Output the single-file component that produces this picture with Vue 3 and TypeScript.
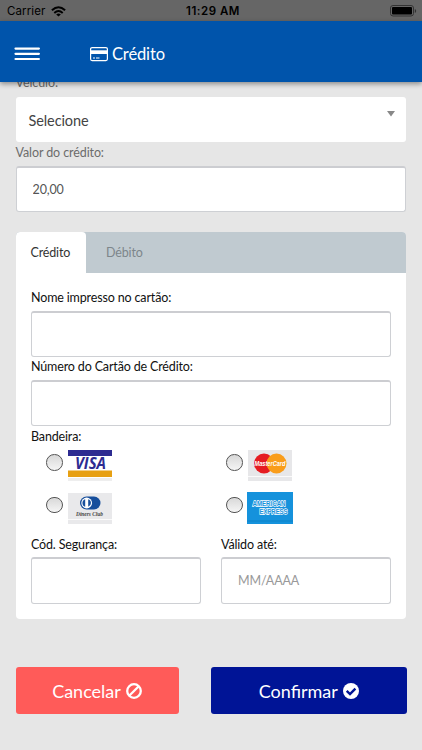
<script setup lang="ts">
import { ref } from 'vue'

type Brand = 'visa' | 'mastercard' | 'diners' | 'amex'

const tab = ref<'credito' | 'debito'>('credito')
const brand = ref<Brand | ''>('')
const amount = ref('20,00')
const brands: Brand[] = ['visa', 'mastercard', 'diners', 'amex']
</script>

<template>
  <div class="screen">
    <div class="status">
      <div class="carrier">
        <span>Carrier</span>
        <svg width="15" height="11" viewBox="0 0 15 11" fill="none" stroke="#000" stroke-width="2">
          <path d="M.9 4.3Q7.500-1.700 14.100 4.300" />
          <path d="M3.300 6.900Q7.500 3.200 11.700 6.900" />
          <path d="M7.500 10.600L5.200 8.400Q7.500 6.700 9.800 8.400Z" fill="#000" stroke="none" />
        </svg>
      </div>
      <div class="clock">11:29 AM</div>
      <div class="battery">
        <svg width="27" height="12" viewBox="0 0 27 12">
          <rect x=".5" y=".5" width="23" height="10.500" rx="2.500" fill="none" stroke="#333" />
          <rect x="2" y="2" width="20" height="7.500" rx="1" fill="#000" />
          <path d="M24.800 4v4q1.400-.6 1.400-2t-1.400-2z" fill="#333" />
        </svg>
      </div>
    </div>

    <header class="bar">
      <svg class="menu" width="26" height="14" viewBox="0 0 26 14" stroke="#fff" stroke-width="2.200" stroke-linecap="round">
        <path d="M1.500 1.600h23.400M1.500 6.800h23.400M1.500 12h23.400" />
      </svg>
      <div class="title">
        <svg width="18" height="16" viewBox="0 0 18 16">
          <rect x=".6" y="1.600" width="16.800" height="13" rx="1.500" fill="none" stroke="#fff" stroke-width="1.200" />
          <path d="M1 4.300h16v3.700H1z" fill="#fff" />
          <path d="M3 12h2M6 12h3.500" stroke="#fff" stroke-width="1.200" />
        </svg>
        <span>Crédito</span>
      </div>
    </header>

    <main class="content">
      <label class="lbl muted first">Veículo:</label>
      <div class="select">
        <span>Selecione</span>
        <svg width="8" height="6" viewBox="0 0 8 6"><path d="M0 0h8L4 5.500z" fill="#888" /></svg>
      </div>
      <label class="lbl muted value-label">Valor do crédito:</label>
      <input v-model="amount" class="field" />

      <section class="card">
        <nav class="tabs">
          <div class="tab" :class="{ active: tab === 'credito' }" @click="tab = 'credito'">Crédito</div>
          <div class="tab" :class="{ active: tab === 'debito' }" @click="tab = 'debito'">Débito</div>
        </nav>
        <div class="form">
          <label class="lbl">Nome impresso no cartão:</label>
          <input class="field" />
          <label class="lbl">Número do Cartão de Crédito:</label>
          <input class="field" />
          <label class="lbl brand-label">Bandeira:</label>
          <div class="brands">
            <div v-for="b in brands" :key="b" class="brand" @click="brand = b">
              <span class="radio" :class="{ on: brand === b }"></span>
              <svg v-if="b === 'visa'" width="46" height="33" viewBox="0 0 46 33">
                <rect x="1" y="1" width="44" height="31" fill="#fff" />
                <rect x="1" y="29" width="44" height="3" fill="#eee" />
                <rect x="1" y="1" width="44" height="6" fill="#2d2b91" />
                <rect x="1" y="21.500" width="44" height="6.500" fill="#e7a013" />
                <text x="8" y="19.600" class="visa" textLength="31" lengthAdjust="spacingAndGlyphs">VISA</text>
              </svg>
              <svg v-else-if="b === 'mastercard'" width="46" height="33" viewBox="0 0 46 33">
                <rect x="1" y="1" width="44" height="31" fill="#e7e7e9" />
                <rect x="1" y="27" width="44" height="1" fill="#fafafa" />
                <circle cx="17" cy="14.500" r="10" fill="#e51c22" />
                <circle cx="29.500" cy="14.500" r="10" fill="#f99d1b" />
                <text x="7.500" y="17.200" class="master" textLength="31" lengthAdjust="spacingAndGlyphs">MasterCard</text>
              </svg>
              <svg v-else-if="b === 'diners'" width="46" height="33" viewBox="0 0 46 33">
                <rect x="1" y="1" width="44" height="31" fill="#e9e9eb" />
                <rect x="1" y="27" width="44" height="1" fill="#fafafa" />
                <rect x="13" y="4.500" width="20.500" height="13" rx="6.500" fill="#174f9c" />
                <circle cx="19.700" cy="11" r="5.400" fill="#fff" />
                <path d="M18.200 7.200v7.600a4 4 0 0 1 0-7.600zM21.200 7.200v7.600a4 4 0 0 0 0-7.600z" fill="#174f9c" />
                <text x="9" y="24.300" class="diners" textLength="27" lengthAdjust="spacingAndGlyphs">Diners Club</text>
              </svg>
              <svg v-else width="46" height="33" viewBox="0 0 46 33">
                <rect width="46" height="32" fill="#1592dc" />
                <rect y="28.500" width="46" height="1" fill="#0c82c8" />
                <text x="5.500" y="14.300" class="amex" textLength="33" lengthAdjust="spacingAndGlyphs">AMERICAN</text>
                <text x="12.500" y="22" class="amex" textLength="28" lengthAdjust="spacingAndGlyphs">EXPRESS</text>
              </svg>
            </div>
          </div>
          <div class="pair">
            <div><label class="lbl">Cód. Segurança:</label><input class="field" /></div>
            <div><label class="lbl">Válido até:</label><input class="field" placeholder="MM/AAAA" /></div>
          </div>
        </div>
      </section>

      <div class="actions">
        <button class="btn cancel">
          <span>Cancelar</span>
          <svg width="16" height="16" viewBox="0 0 16 16" fill="none" stroke="#fff" stroke-width="2.300">
            <circle cx="8" cy="8" r="6.800" /><path d="M3.200 12.800L12.800 3.200" />
          </svg>
        </button>
        <button class="btn confirm">
          <span>Confirmar</span>
          <svg width="16" height="16" viewBox="0 0 16 16">
            <circle cx="8" cy="8" r="8" fill="#fff" />
            <path d="M3.700 7.800L7 11L12.400 5.600" fill="none" stroke="#001496" stroke-width="2.400" />
          </svg>
        </button>
      </div>
    </main>
  </div>
</template>

<style>
body { background: #e6e6e6; }
</style>

<style scoped>
.screen {
  height: 750px;
  overflow: hidden;
  background: #e6e6e6;
  font-family: Lato, "Liberation Sans", sans-serif;
  display: flex;
  flex-direction: column;
}
.screen *, .screen *::before { box-sizing: border-box; }
.screen svg { overflow: visible; flex: none; }
.status {
  flex: none;
  height: 21px;
  background: #666;
  color: #000;
  display: grid;
  grid-template-columns: 1fr auto 1fr;
  align-items: center;
  padding: 0 5px 0 7px;
  font: 11.500px/21px Inter, sans-serif;
}
.carrier { display: flex; align-items: center; gap: 6px; letter-spacing: 0.1px; }
.clock { font-weight: 600; font-size: 11.500px; padding-top: 1px; letter-spacing: 0.5px; padding-left: 2px; }
.battery { display: flex; justify-content: flex-end; }
.bar {
  flex: none;
  position: relative;
  z-index: 1;
  height: 61px;
  background: #0054ab;
  box-shadow: 0 2px 5px rgba(0, 0, 0, 0.4);
  display: flex;
  align-items: center;
  padding: 4px 0 0 14px;
  color: #fff;
}
.title { display: flex; align-items: center; gap: 4px; margin-left: 50px; font-size: 16.500px; letter-spacing: -0.120px; }
.content { padding: 0 16px 0 15.500px; display: flex; flex-direction: column; }
.lbl { display: block; height: 23px; line-height: 20px; font-size: 12.500px; letter-spacing: -0.150px; color: #111; white-space: nowrap; }
.lbl.muted { color: #6c6c6c; letter-spacing: -0.100px; }
.lbl.first { height: 15px; line-height: 17px; margin-top: -8px; margin-bottom: 8px; }
.brand-label { line-height: 21px; }
.value-label { height: 24px; line-height: 21px; }
.select {
  height: 45px;
  background: #fff;
  border-radius: 3px;
  display: flex;
  justify-content: space-between;
  padding: 0 11px 0 13px;
  font-size: 14.500px;
  letter-spacing: -0.100px;
  line-height: 47px;
  color: #444;
}
.select svg { margin-top: 14px; }
.field {
  display: block;
  width: 100%;
  height: 46px;
  border: 1px solid #ced0d4;
  border-top: 2px solid #cccdd1;
  border-radius: 3px;
  background: #fff;
  padding: 0 16px 1px;
  font: 12.500px Lato, sans-serif;
  letter-spacing: -0.120px;
  color: #555;
  outline: none;
}
.field::placeholder { color: #999; opacity: 1; }
.card {
  margin-top: 20px;
  height: 387px;
  background: #fff;
  border-radius: 4px;
  overflow: hidden;
}
.tabs { height: 41px; background: #c0cad0; display: flex; }
.tab { padding: 0 15px; line-height: 42px; font-size: 12.500px; letter-spacing: -0.150px; color: #7d868b; width: 70.500px; white-space: nowrap; }
.tab:last-child { padding-left: 20px; }
.tab.active { background: #fff; color: #333; border-radius: 4px 4px 0 0; }
.form { padding: 15px 15px 0 15.500px; }
.brands {
  display: grid;
  grid-template-columns: 180px 1fr;
  grid-auto-rows: 42.500px;
  padding-left: 15px;
  height: 85px;
}
.brand { display: flex; align-items: flex-start; gap: 4px; }
.radio {
  flex: none;
  width: 16.500px;
  height: 16.500px;
  margin-top: 5px;
  border: 1.500px solid #555;
  border-radius: 50%;
  background: linear-gradient(#d8d8d8, #f5f5f5);
}
.radio.on { background: radial-gradient(#333 35%, #eee 40%); }
.visa { font: italic bold 15.500px "Open Sans", sans-serif; fill: #2d2b91; }
.master { font: italic bold 6.500px "Liberation Sans", sans-serif; fill: #fff; }
.diners { font: italic bold 6.500px "Liberation Serif", serif; fill: #444; }
.amex { font: bold 7.500px "Liberation Sans", sans-serif; fill: #1592dc; stroke: #fff; stroke-width: 1.300px; paint-order: stroke; }
.pair { display: grid; grid-template-columns: 170px 170px; gap: 20px; }
.pair .lbl { line-height: 21px; }
.pair .field { height: 47px; }
.actions { display: flex; justify-content: space-between; margin-top: 48px; margin-right: -0.500px; }
.btn {
  display: flex;
  align-items: center;
  justify-content: center;
  gap: 5px;
  height: 47px;
  border: 0;
  border-radius: 3px;
  padding: 1px 0 0;
  color: #fff;
  font: 18px Lato, sans-serif;
}
.cancel { width: 163px; background: #ff5b59; }
.confirm { width: 195.500px; background: #001496; }
</style>
